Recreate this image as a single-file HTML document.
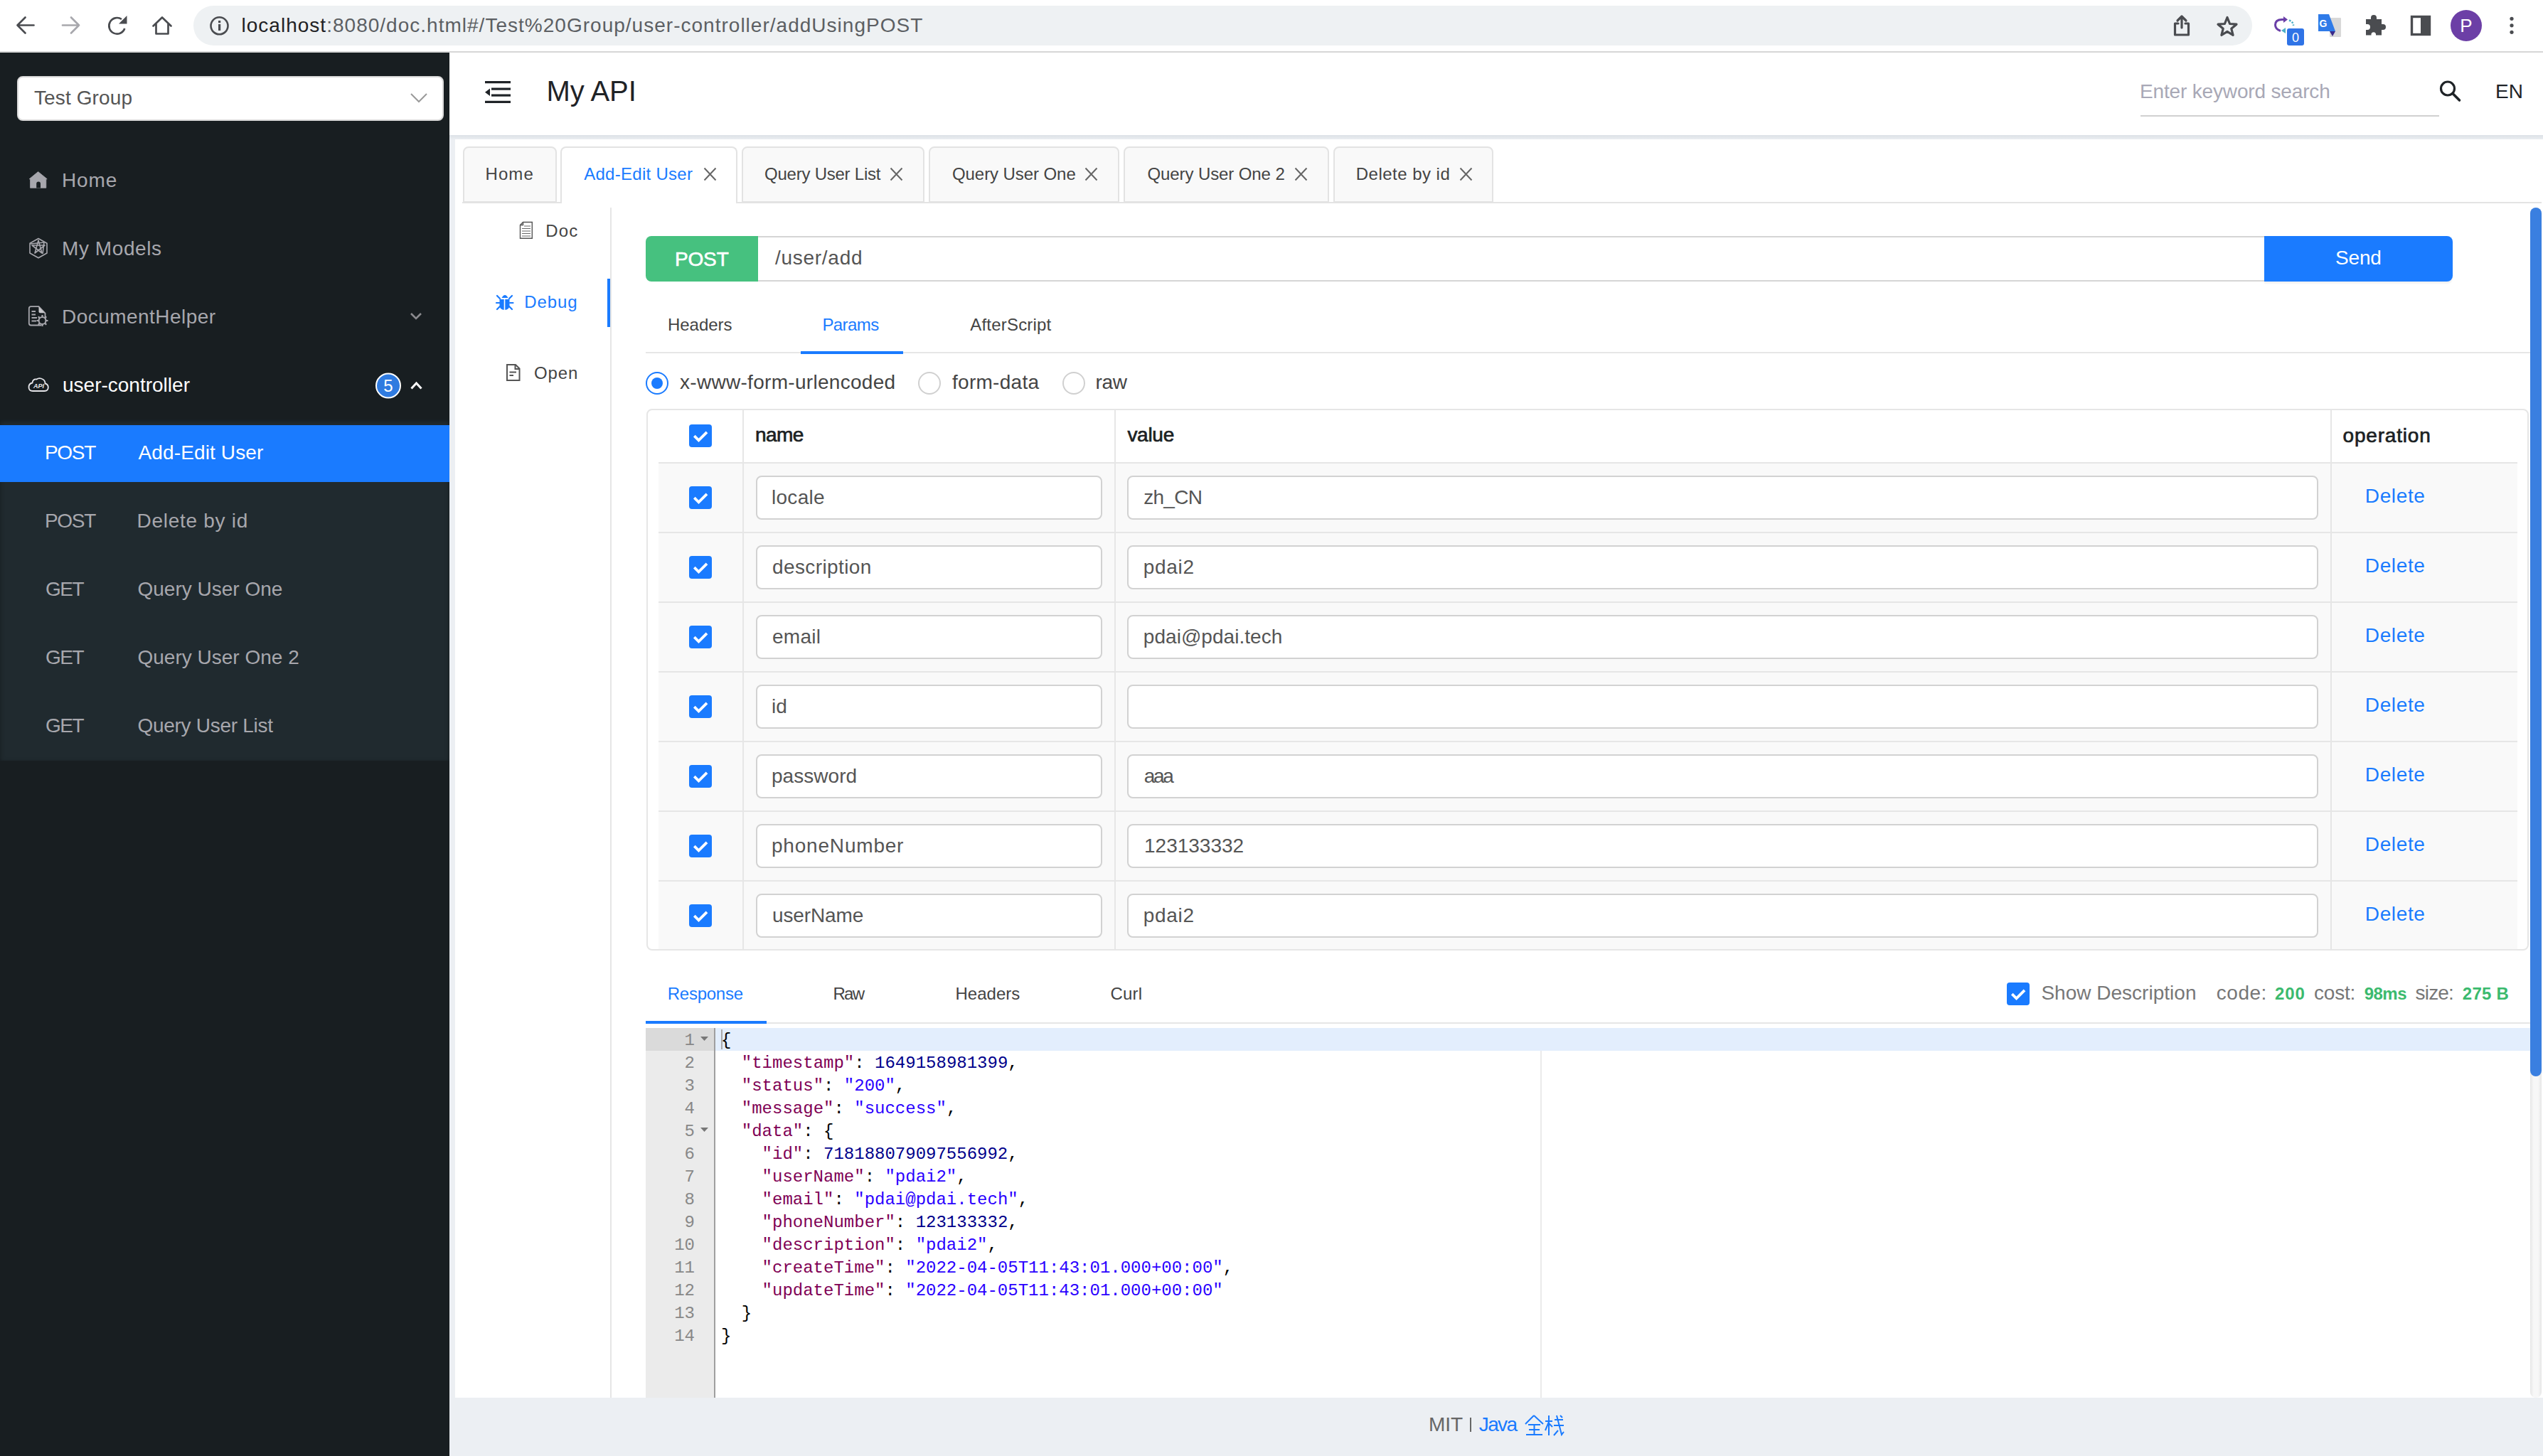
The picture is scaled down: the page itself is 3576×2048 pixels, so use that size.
<!DOCTYPE html>
<html><head><meta charset="utf-8"><title>Knife4j</title>
<style>
html,body{margin:0;padding:0;width:3576px;height:2048px;overflow:hidden;background:#fff;font-family:'Liberation Sans', sans-serif}
.t{position:absolute;line-height:1;white-space:pre}
svg{overflow:visible}
</style></head><body>
<div style="position:absolute;left:0px;top:0px;width:3576px;height:72px;background:#fff"></div>
<div style="position:absolute;left:0px;top:72px;width:3576px;height:2px;background:#d6d6d6"></div>
<div style="position:absolute;left:272px;top:8px;width:2895px;height:56px;background:#eef1f3;border-radius:28px"></div>
<svg style="position:absolute;left:0;top:0" width="420" height="72" viewBox="0 0 420 72">
<g fill="none" stroke="#4a4c50" stroke-width="2.7" stroke-linecap="round" stroke-linejoin="round">
<path d="M47.5 35.5H24.5M35.5 24.5L24.5 35.5L35.5 46.5"/>
</g>
<g fill="none" stroke="#a8a8ad" stroke-width="2.7" stroke-linecap="round" stroke-linejoin="round">
<path d="M88 35.5H111M100 24.5L111 35.5L100 46.5"/>
</g>
<g fill="none" stroke="#4a4c50" stroke-width="2.7">
<path d="M175.3 40A11.3 11.3 0 1 1 171 27"/>
</g>
<path d="M167 33.5L178.5 33.5L178.5 22Z" fill="#4a4c50"/>
<g fill="none" stroke="#4a4c50" stroke-width="2.7" stroke-linejoin="round" stroke-linecap="round">
<path d="M215.5 36.5L228 24.5L240.5 36.5M219.5 33.5V47.5H236.5V33.5"/>
</g>
<g fill="none" stroke="#4a4c50" stroke-width="2.6"><circle cx="308.5" cy="36.3" r="12"/></g>
<rect x="307" y="34" width="3.2" height="9" fill="#4a4c50"/><rect x="307" y="29" width="3.2" height="3.2" fill="#4a4c50"/>
</svg>
<div class="t" id="t0" style="left:339.50px;top:22.10px;font-size:28px;color:#5c5f63;font-weight:400;font-family:'Liberation Sans', sans-serif;letter-spacing:1.015px;"><span style="color:#1f2124">localhost</span>:8080/doc.html#/Test%20Group/user-controller/addUsingPOST</div>
<svg style="position:absolute;left:3040px;top:0" width="536" height="72" viewBox="3040 0 536 72">
<g fill="none" stroke="#4a4c50" stroke-width="3.2" stroke-linejoin="round" stroke-linecap="round">
<path d="M3063 33H3058.5V49H3077.5V33H3073M3068 39V23.5M3062 29L3068 23L3074 29"/>
<path d="M3132 24.5L3135.6 33.5L3145 34.2L3137.8 40.3L3140.1 49.5L3132 44.4L3123.9 49.5L3126.2 40.3L3119 34.2L3128.4 33.5Z"/>
</g>
<path d="M3207 43.5Q3199.5 41 3199.5 35Q3199.5 27.5 3209 27.5H3212" fill="none" stroke="#6a3fa8" stroke-width="3"/>
<path d="M3211 23L3217 27.5L3211 32Z" fill="#6a3fa8"/>
<path d="M3219 28.5Q3225 31 3225 36" fill="none" stroke="#4eb0c8" stroke-width="2.6" stroke-dasharray="2.5 1.8"/>
<path d="M3214 39L3208 43L3214 47Z" fill="#4eb0c8"/>
<rect x="3216" y="40" width="24" height="24" rx="3" fill="#2f73e6"/>
<text x="3228" y="59" font-family="Liberation Sans" font-size="18" fill="#fff" text-anchor="middle">0</text>
<rect x="3276" y="25" width="16" height="27" rx="1" fill="#d8d8d8"/>
<path d="M3260 20H3275L3284 44H3260Z" fill="#2f7be8"/>
<path d="M3276 44L3280 51L3284 44Z" fill="#3a2a8a"/>
<text x="3267" y="38" font-family="Liberation Sans" font-size="14" font-weight="700" fill="#fff" text-anchor="middle">G</text>
<path d="M3327 27H3334V25A4 4 0 0 1 3342 25V27H3349V34H3351A4 4 0 0 1 3351 42H3349V49.5H3341V47.5A3.5 3.5 0 0 0 3334.5 47.5V49.5H3327V42H3329A4 4 0 0 0 3329 34H3327Z" fill="#4a4c50"/>
<rect x="3391.5" y="23.5" width="25" height="25" fill="none" stroke="#4a4c50" stroke-width="3.4"/>
<rect x="3404" y="23.5" width="12.5" height="25" fill="#4a4c50"/>
<circle cx="3468" cy="36" r="22" fill="#6c3fa6"/>
<text x="3468" y="45" font-family="Liberation Sans" font-size="26" fill="#fff" text-anchor="middle">P</text>
<circle cx="3532" cy="26.3" r="2.6" fill="#4a4c50"/><circle cx="3532" cy="35.8" r="2.6" fill="#4a4c50"/><circle cx="3532" cy="45.3" r="2.6" fill="#4a4c50"/>
</svg>
<div style="position:absolute;left:0px;top:74px;width:632px;height:1974px;background:#181e21"></div>
<div style="position:absolute;left:24px;top:107px;width:600px;height:63px;background:#fff;border-radius:8px;box-sizing:border-box;border:2px solid #d9d9d9"></div>
<div class="t" id="t1" style="left:48.00px;top:123.90px;font-size:28px;color:#555;font-weight:400;font-family:'Liberation Sans', sans-serif;letter-spacing:0.111px;">Test Group</div>
<svg style="position:absolute;left:576px;top:130px" width="26" height="16"><path d="M2 2L13 13L24 2" fill="none" stroke="#9a9a9a" stroke-width="2"/></svg>
<div class="t" id="t2" style="left:87.00px;top:239.70px;font-size:28px;color:#a7a7ad;font-weight:400;font-family:'Liberation Sans', sans-serif;letter-spacing:0.900px;">Home</div>
<div class="t" id="t3" style="left:87.00px;top:335.70px;font-size:28px;color:#a7a7ad;font-weight:400;font-family:'Liberation Sans', sans-serif;letter-spacing:0.587px;">My Models</div>
<div class="t" id="t4" style="left:87.00px;top:431.70px;font-size:28px;color:#a7a7ad;font-weight:400;font-family:'Liberation Sans', sans-serif;letter-spacing:0.462px;">DocumentHelper</div>
<div class="t" id="t5" style="left:88.00px;top:527.70px;font-size:28px;color:#fff;font-weight:400;font-family:'Liberation Sans', sans-serif;letter-spacing:0.000px;">user-controller</div>
<svg style="position:absolute;left:0;top:220px" width="632" height="360" viewBox="0 220 632 360">
<path d="M53.6 241.6L66.2 251.8H64.8V264.3H42.6V251.8H41.2Z" fill="#a7a7ad" stroke="#a7a7ad" stroke-width="0.8" stroke-linejoin="round"/>
<path d="M51.2 264.6V258.5A2.9 2.9 0 0 1 57 258.5V264.6Z" fill="#181e21"/>
<g fill="none" stroke="#a7a7ad" stroke-width="1.6" stroke-linejoin="round">
<path d="M54 335.5L66 342.3V356L54 362.8L42 356V342.3Z"/>
<path d="M54 338L59 356L45 345H63L49 356Z"/>
<path d="M43 343L62 341L60 357"/>
</g>
<g fill="none" stroke="#a7a7ad" stroke-width="1.8">
<path d="M58 457.5H43.5Q40.8 457.5 40.8 454.8V434Q40.8 431.2 43.5 431.2H54.5L63.5 440.5V447"/>
</g>
<path d="M54.5 431.5L63 440.3H56.5Q54.5 440.3 54.5 438.3Z" fill="#c8c8cc"/>
<g stroke="#a7a7ad" stroke-width="1.8"><path d="M44.5 438H50M44.5 442.5H50M44.5 447H52M44.5 451.5H51"/></g>
<g fill="none" stroke="#a7a7ad" stroke-width="2.2"><circle cx="59.5" cy="451" r="5"/></g>
<g stroke="#a7a7ad" stroke-width="2.2" stroke-linecap="butt"><path d="M59.5 443V445.5M59.5 456.5V459M51.5 451H54M65 451H67.5M53.8 445.3L55.6 447.1M63.4 454.9L65.2 456.7M53.8 456.7L55.6 454.9M63.4 447.1L65.2 445.3"/></g>
<path d="M46 550Q40.5 550 40.5 544.5Q40.5 539.5 45.5 538.5Q46 533 51.5 533.5Q54 531.5 58 532.5Q63.5 534 63.5 539.5Q67.8 540.5 67.8 544.8Q67.8 550 62.5 550Z" fill="none" stroke="#e6e6ea" stroke-width="1.8"/>
<text x="54.5" y="546" font-family="Liberation Sans" font-size="9" font-style="italic" font-weight="700" fill="#e6e6ea" text-anchor="middle">API</text>
<path d="M578 441L585 448L592 441" fill="none" stroke="#8a8a8e" stroke-width="2.6"/>
<path d="M578.5 546.5L585.5 539L592.5 546.5" fill="none" stroke="#ffffff" stroke-width="3"/>
<circle cx="546" cy="542.5" r="17" fill="#2f7be0" stroke="#fff" stroke-width="2"/>
</svg>
<div class="t" id="t6" style="left:546px;transform:translateX(-50%);top:531.10px;font-size:24px;color:#fff;font-weight:400;font-family:'Liberation Sans', sans-serif;">5</div>
<div style="position:absolute;left:0px;top:590px;width:632px;height:479.5px;background:#202a2f;box-shadow:inset 0 2px 6px rgba(0,0,0,.35)"></div>
<div style="position:absolute;left:0px;top:597.5px;width:632px;height:80px;background:#1a7bff"></div>
<div class="t" id="t7" style="left:63.00px;top:623.20px;font-size:28px;color:#fff;font-weight:400;font-family:'Liberation Sans', sans-serif;letter-spacing:-1.333px;">POST</div>
<div class="t" id="t8" style="left:194.50px;top:623.20px;font-size:28px;color:#fff;font-weight:400;font-family:'Liberation Sans', sans-serif;letter-spacing:0.125px;">Add-Edit User</div>
<div class="t" id="t9" style="left:63.00px;top:719.20px;font-size:28px;color:#a7a7ad;font-weight:400;font-family:'Liberation Sans', sans-serif;letter-spacing:-1.333px;">POST</div>
<div class="t" id="t10" style="left:192.50px;top:719.20px;font-size:28px;color:#a7a7ad;font-weight:400;font-family:'Liberation Sans', sans-serif;letter-spacing:0.727px;">Delete by id</div>
<div class="t" id="t11" style="left:64.00px;top:815.20px;font-size:28px;color:#a7a7ad;font-weight:400;font-family:'Liberation Sans', sans-serif;letter-spacing:-1.500px;">GET</div>
<div class="t" id="t12" style="left:193.50px;top:815.20px;font-size:28px;color:#a7a7ad;font-weight:400;font-family:'Liberation Sans', sans-serif;letter-spacing:0.000px;">Query User One</div>
<div class="t" id="t13" style="left:64.00px;top:911.20px;font-size:28px;color:#a7a7ad;font-weight:400;font-family:'Liberation Sans', sans-serif;letter-spacing:-1.500px;">GET</div>
<div class="t" id="t14" style="left:193.50px;top:911.20px;font-size:28px;color:#a7a7ad;font-weight:400;font-family:'Liberation Sans', sans-serif;letter-spacing:0.000px;">Query User One 2</div>
<div class="t" id="t15" style="left:64.00px;top:1007.20px;font-size:28px;color:#a7a7ad;font-weight:400;font-family:'Liberation Sans', sans-serif;letter-spacing:-1.500px;">GET</div>
<div class="t" id="t16" style="left:193.50px;top:1007.20px;font-size:28px;color:#a7a7ad;font-weight:400;font-family:'Liberation Sans', sans-serif;letter-spacing:-0.286px;">Query User List</div>
<div style="position:absolute;left:632px;top:74px;width:2944px;height:116px;background:#fff"></div>
<div style="position:absolute;left:632px;top:189.5px;width:2944px;height:1858.5px;background:#eceff3"></div>
<div style="position:absolute;left:632px;top:189.5px;width:2944px;height:7px;background:linear-gradient(#dde1e6,#eceff3)"></div>
<svg style="position:absolute;left:680px;top:110px" width="42" height="40" viewBox="680 110 42 40">
<g fill="#1f2327"><rect x="682" y="114" width="36" height="3.2"/><rect x="691" y="123.5" width="27" height="3.2"/><rect x="691" y="132.5" width="27" height="3.2"/><rect x="682" y="141.8" width="36" height="3.2"/>
<path d="M682 129.8L689 124.5V135Z"/></g></svg>
<div class="t" id="t17" style="left:768.60px;top:107.80px;font-size:40px;color:#1f2327;font-weight:400;font-family:'Liberation Sans', sans-serif;letter-spacing:-0.100px;">My API</div>
<div class="t" id="t18" style="left:3009.00px;top:114.95px;font-size:28px;color:#a8a8b6;font-weight:400;font-family:'Liberation Sans', sans-serif;letter-spacing:-0.158px;">Enter keyword search</div>
<div style="position:absolute;left:3010px;top:162px;width:420px;height:2px;background:#d0d0d0"></div>
<svg style="position:absolute;left:3425px;top:108px" width="40" height="40" viewBox="3425 108 40 40">
<circle cx="3442" cy="124.5" r="9.5" fill="none" stroke="#1f2327" stroke-width="3.2"/><path d="M3449 131.5L3458.5 141" stroke="#1f2327" stroke-width="3.6" stroke-linecap="round"/></svg>
<div class="t" id="t19" style="left:3509.00px;top:114.95px;font-size:28px;color:#1f2327;font-weight:400;font-family:'Liberation Sans', sans-serif;letter-spacing:0.000px;">EN</div>
<div style="position:absolute;left:640px;top:196px;width:2936px;height:1770px;background:#fff"></div>
<div style="position:absolute;left:650px;top:284px;width:2924px;height:2px;background:#e3e3e3"></div>
<div style="position:absolute;left:650.5px;top:206px;width:132.0px;height:79px;box-sizing:border-box;background:#f9f9f9;border:2px solid #e3e3e3;border-radius:8px 8px 0 0;"></div>
<div class="t" id="t20" style="left:682.50px;top:232.60px;font-size:24px;color:#444;font-weight:400;font-family:'Liberation Sans', sans-serif;letter-spacing:1.083px;">Home</div>
<div style="position:absolute;left:788px;top:206px;width:249px;height:79px;box-sizing:border-box;background:#fff;border:2px solid #e3e3e3;border-radius:8px 8px 0 0;border-bottom:0;height:80px;"></div>
<div class="t" id="t21" style="left:821.20px;top:232.60px;font-size:24px;color:#1a7bff;font-weight:400;font-family:'Liberation Sans', sans-serif;letter-spacing:0.275px;">Add-Edit User</div>
<svg style="position:absolute;left:989.6px;top:236px" width="17" height="18"><path d="M0.5 0.5L16.5 17.5M16.5 0.5L0.5 17.5" stroke="#666" stroke-width="2"/></svg>
<div style="position:absolute;left:1042.5px;top:206px;width:257.5px;height:79px;box-sizing:border-box;background:#f9f9f9;border:2px solid #e3e3e3;border-radius:8px 8px 0 0;"></div>
<div class="t" id="t22" style="left:1075.00px;top:232.60px;font-size:24px;color:#444;font-weight:400;font-family:'Liberation Sans', sans-serif;letter-spacing:-0.232px;">Query User List</div>
<svg style="position:absolute;left:1252px;top:236px" width="17" height="18"><path d="M0.5 0.5L16.5 17.5M16.5 0.5L0.5 17.5" stroke="#666" stroke-width="2"/></svg>
<div style="position:absolute;left:1305.5px;top:206px;width:268.5px;height:79px;box-sizing:border-box;background:#f9f9f9;border:2px solid #e3e3e3;border-radius:8px 8px 0 0;"></div>
<div class="t" id="t23" style="left:1339.00px;top:232.60px;font-size:24px;color:#444;font-weight:400;font-family:'Liberation Sans', sans-serif;letter-spacing:-0.077px;">Query User One</div>
<svg style="position:absolute;left:1526px;top:236px" width="17" height="18"><path d="M0.5 0.5L16.5 17.5M16.5 0.5L0.5 17.5" stroke="#666" stroke-width="2"/></svg>
<div style="position:absolute;left:1579.5px;top:206px;width:289.5px;height:79px;box-sizing:border-box;background:#f9f9f9;border:2px solid #e3e3e3;border-radius:8px 8px 0 0;"></div>
<div class="t" id="t24" style="left:1613.50px;top:232.60px;font-size:24px;color:#444;font-weight:400;font-family:'Liberation Sans', sans-serif;letter-spacing:-0.100px;">Query User One 2</div>
<svg style="position:absolute;left:1821px;top:236px" width="17" height="18"><path d="M0.5 0.5L16.5 17.5M16.5 0.5L0.5 17.5" stroke="#666" stroke-width="2"/></svg>
<div style="position:absolute;left:1874.5px;top:206px;width:225.5px;height:79px;box-sizing:border-box;background:#f9f9f9;border:2px solid #e3e3e3;border-radius:8px 8px 0 0;"></div>
<div class="t" id="t25" style="left:1906.75px;top:232.60px;font-size:24px;color:#444;font-weight:400;font-family:'Liberation Sans', sans-serif;letter-spacing:0.477px;">Delete by id</div>
<svg style="position:absolute;left:2052.5px;top:236px" width="17" height="18"><path d="M0.5 0.5L16.5 17.5M16.5 0.5L0.5 17.5" stroke="#666" stroke-width="2"/></svg>
<div style="position:absolute;left:857.5px;top:292px;width:2px;height:1674px;background:#e6e6e6"></div>
<div style="position:absolute;left:854px;top:392px;width:4px;height:68px;background:#1a7bff"></div>
<div class="t" id="t26" style="left:767.20px;top:312.50px;font-size:24px;color:#444;font-weight:400;font-family:'Liberation Sans', sans-serif;letter-spacing:1.150px;">Doc</div>
<div class="t" id="t27" style="left:737.20px;top:412.50px;font-size:24px;color:#1a7bff;font-weight:400;font-family:'Liberation Sans', sans-serif;letter-spacing:0.950px;">Debug</div>
<div class="t" id="t28" style="left:751.00px;top:512.50px;font-size:24px;color:#444;font-weight:400;font-family:'Liberation Sans', sans-serif;letter-spacing:0.867px;">Open</div>
<svg style="position:absolute;left:690px;top:300px" width="70" height="250" viewBox="690 300 70 250">
<g fill="none" stroke="#555" stroke-width="1.4"><path d="M735.5 312.5H748.3V335.3H731.5V316.5Z M735.5 312.5V316.5H731.5"/></g>
<g stroke="#666" stroke-width="1.2"><path d="M737 318H746M734 321.5H746M734 325H746M734 328.5H746M734 332H746"/></g>
<g fill="#1a7bff">
<path d="M705.5 419Q710 411 714.5 419Z"/>
<path d="M702.5 421H716.5V429Q716.5 436 709.5 436Q702.5 436 702.5 429Z"/>
</g>
<g stroke="#fff" stroke-width="1.6"><path d="M709.5 421V436"/></g>
<g stroke="#1a7bff" stroke-width="2.2" stroke-linecap="round"><path d="M699 416L703 420M720 416L716 420M698 426H702.5M717 426H721.5M699 435L703 431M720 435L716 431"/></g>
<g fill="none" stroke="#555" stroke-width="2"><path d="M713 513H725L730.5 518.5V535H713Z M724.5 513V519H730.5"/></g>
<g stroke="#555" stroke-width="2"><path d="M716.5 523.5H726M716.5 528H722"/></g>
</svg>
<div style="position:absolute;left:908px;top:332px;width:158px;height:63.5px;background:#46c17f;border-radius:8px 0 0 8px"></div>
<div class="t" id="t29" style="left:949.00px;top:351.20px;font-size:28px;color:#fff;font-weight:400;font-family:'Liberation Sans', sans-serif;letter-spacing:-0.167px;-webkit-text-stroke:0.6px #fff;">POST</div>
<div style="position:absolute;left:1066px;top:332px;width:2118px;height:63.5px;box-sizing:border-box;border:2px solid #d5d5d5;border-left:0;border-right:0;background:#fff"></div>
<div class="t" id="t30" style="left:1090.00px;top:349.20px;font-size:28px;color:#555;font-weight:400;font-family:'Liberation Sans', sans-serif;letter-spacing:0.719px;">/user/add</div>
<div style="position:absolute;left:3184px;top:332px;width:265px;height:63.5px;background:#1a7bff;border-radius:0 8px 8px 0;box-shadow:0 3px 2px rgba(0,0,0,.05)"></div>
<div class="t" id="t31" style="left:3284.00px;top:348.70px;font-size:28px;color:#fff;font-weight:400;font-family:'Liberation Sans', sans-serif;letter-spacing:-0.167px;">Send</div>
<div style="position:absolute;left:908px;top:494.5px;width:2650px;height:2px;background:#e6e6e6"></div>
<div style="position:absolute;left:1126px;top:494px;width:144px;height:4px;background:#1a7bff"></div>
<div class="t" id="t32" style="left:939.00px;top:445.00px;font-size:24px;color:#444;font-weight:400;font-family:'Liberation Sans', sans-serif;letter-spacing:-0.033px;">Headers</div>
<div class="t" id="t33" style="left:1156.40px;top:445.00px;font-size:24px;color:#1a7bff;font-weight:400;font-family:'Liberation Sans', sans-serif;letter-spacing:-0.580px;">Params</div>
<div class="t" id="t34" style="left:1364.30px;top:445.00px;font-size:24px;color:#444;font-weight:400;font-family:'Liberation Sans', sans-serif;letter-spacing:0.190px;">AfterScript</div>
<div style="position:absolute;left:908px;top:523px;width:32px;height:32px;box-sizing:border-box;border:2px solid #1a7bff;border-radius:50%"></div>
<div style="position:absolute;left:916px;top:531px;width:16px;height:16px;background:#1a7bff;border-radius:50%"></div>
<div class="t" id="t35" style="left:956.00px;top:524.20px;font-size:28px;color:#444;font-weight:400;font-family:'Liberation Sans', sans-serif;letter-spacing:0.300px;">x-www-form-urlencoded</div>
<div style="position:absolute;left:1291px;top:523px;width:32px;height:32px;box-sizing:border-box;border:2px solid #d0d0d0;border-radius:50%"></div>
<div class="t" id="t36" style="left:1339.00px;top:524.20px;font-size:28px;color:#444;font-weight:400;font-family:'Liberation Sans', sans-serif;letter-spacing:0.281px;">form-data</div>
<div style="position:absolute;left:1494px;top:523px;width:32px;height:32px;box-sizing:border-box;border:2px solid #d0d0d0;border-radius:50%"></div>
<div class="t" id="t37" style="left:1540.50px;top:524.20px;font-size:28px;color:#444;font-weight:400;font-family:'Liberation Sans', sans-serif;letter-spacing:-0.375px;">raw</div>
<div style="position:absolute;left:908.5px;top:575px;width:2647.5px;height:762px;box-sizing:border-box;border:2px solid #e6e6e6;border-radius:8px"></div>
<svg style="position:absolute;left:969px;top:597px" width="32" height="32"><rect width="32" height="32" rx="4" fill="#1a7bff"/><path d="M7.3 16.2L13.5 22.4L25 10.8" fill="none" stroke="#fff" stroke-width="3.8"/></svg>
<div style="position:absolute;left:926px;top:650px;width:2614px;height:2px;background:#e6e6e6"></div>
<div class="t" id="t38" style="left:1062.00px;top:598.20px;font-size:28px;color:#1b1f23;font-weight:400;font-family:'Liberation Sans', sans-serif;letter-spacing:-0.567px;-webkit-text-stroke:0.7px #1b1f23;">name</div>
<div class="t" id="t39" style="left:1585.40px;top:598.20px;font-size:28px;color:#1b1f23;font-weight:400;font-family:'Liberation Sans', sans-serif;letter-spacing:-0.275px;-webkit-text-stroke:0.7px #1b1f23;">value</div>
<div class="t" id="t40" style="left:3294.60px;top:598.50px;font-size:28px;color:#1b1f23;font-weight:400;font-family:'Liberation Sans', sans-serif;letter-spacing:0.800px;-webkit-text-stroke:0.7px #1b1f23;">operation</div>
<div style="position:absolute;left:926px;top:652px;width:2614px;height:96px;background:#f9f9f9"></div>
<div style="position:absolute;left:926px;top:748px;width:2614px;height:2px;background:#e6e6e6"></div>
<svg style="position:absolute;left:969px;top:684px" width="32" height="32"><rect width="32" height="32" rx="4" fill="#1a7bff"/><path d="M7.3 16.2L13.5 22.4L25 10.8" fill="none" stroke="#fff" stroke-width="3.8"/></svg>
<div style="position:absolute;left:1063px;top:668.5px;width:487px;height:62.5px;box-sizing:border-box;background:#fff;border:2px solid #d2d2d2;border-radius:8px"></div>
<div class="t" id="t41" style="left:1085.00px;top:685.60px;font-size:28px;color:#555;font-weight:400;font-family:'Liberation Sans', sans-serif;letter-spacing:0.280px;">locale</div>
<div style="position:absolute;left:1585.4px;top:668.5px;width:1674.6px;height:62.5px;box-sizing:border-box;background:#fff;border:2px solid #d2d2d2;border-radius:8px"></div>
<div class="t" id="t42" style="left:1608.20px;top:685.60px;font-size:28px;color:#555;font-weight:400;font-family:'Liberation Sans', sans-serif;letter-spacing:-0.700px;">zh_CN</div>
<div class="t" id="t43" style="left:3325.80px;top:684.10px;font-size:28px;color:#1a7bff;font-weight:400;font-family:'Liberation Sans', sans-serif;letter-spacing:0.640px;">Delete</div>
<div style="position:absolute;left:926px;top:750px;width:2614px;height:96px;background:#f9f9f9"></div>
<div style="position:absolute;left:926px;top:846px;width:2614px;height:2px;background:#e6e6e6"></div>
<svg style="position:absolute;left:969px;top:782px" width="32" height="32"><rect width="32" height="32" rx="4" fill="#1a7bff"/><path d="M7.3 16.2L13.5 22.4L25 10.8" fill="none" stroke="#fff" stroke-width="3.8"/></svg>
<div style="position:absolute;left:1063px;top:766.5px;width:487px;height:62.5px;box-sizing:border-box;background:#fff;border:2px solid #d2d2d2;border-radius:8px"></div>
<div class="t" id="t44" style="left:1086.00px;top:783.60px;font-size:28px;color:#555;font-weight:400;font-family:'Liberation Sans', sans-serif;letter-spacing:0.400px;">description</div>
<div style="position:absolute;left:1585.4px;top:766.5px;width:1674.6px;height:62.5px;box-sizing:border-box;background:#fff;border:2px solid #d2d2d2;border-radius:8px"></div>
<div class="t" id="t45" style="left:1607.80px;top:783.60px;font-size:28px;color:#555;font-weight:400;font-family:'Liberation Sans', sans-serif;letter-spacing:0.700px;">pdai2</div>
<div class="t" id="t46" style="left:3325.80px;top:782.10px;font-size:28px;color:#1a7bff;font-weight:400;font-family:'Liberation Sans', sans-serif;letter-spacing:0.640px;">Delete</div>
<div style="position:absolute;left:926px;top:848px;width:2614px;height:96px;background:#f9f9f9"></div>
<div style="position:absolute;left:926px;top:944px;width:2614px;height:2px;background:#e6e6e6"></div>
<svg style="position:absolute;left:969px;top:880px" width="32" height="32"><rect width="32" height="32" rx="4" fill="#1a7bff"/><path d="M7.3 16.2L13.5 22.4L25 10.8" fill="none" stroke="#fff" stroke-width="3.8"/></svg>
<div style="position:absolute;left:1063px;top:864.5px;width:487px;height:62.5px;box-sizing:border-box;background:#fff;border:2px solid #d2d2d2;border-radius:8px"></div>
<div class="t" id="t47" style="left:1086.00px;top:881.60px;font-size:28px;color:#555;font-weight:400;font-family:'Liberation Sans', sans-serif;letter-spacing:0.250px;">email</div>
<div style="position:absolute;left:1585.4px;top:864.5px;width:1674.6px;height:62.5px;box-sizing:border-box;background:#fff;border:2px solid #d2d2d2;border-radius:8px"></div>
<div class="t" id="t48" style="left:1607.80px;top:881.60px;font-size:28px;color:#555;font-weight:400;font-family:'Liberation Sans', sans-serif;letter-spacing:0.038px;">pdai@pdai.tech</div>
<div class="t" id="t49" style="left:3325.80px;top:880.10px;font-size:28px;color:#1a7bff;font-weight:400;font-family:'Liberation Sans', sans-serif;letter-spacing:0.640px;">Delete</div>
<div style="position:absolute;left:926px;top:946px;width:2614px;height:96px;background:#f9f9f9"></div>
<div style="position:absolute;left:926px;top:1042px;width:2614px;height:2px;background:#e6e6e6"></div>
<svg style="position:absolute;left:969px;top:978px" width="32" height="32"><rect width="32" height="32" rx="4" fill="#1a7bff"/><path d="M7.3 16.2L13.5 22.4L25 10.8" fill="none" stroke="#fff" stroke-width="3.8"/></svg>
<div style="position:absolute;left:1063px;top:962.5px;width:487px;height:62.5px;box-sizing:border-box;background:#fff;border:2px solid #d2d2d2;border-radius:8px"></div>
<div class="t" id="t50" style="left:1085.00px;top:979.60px;font-size:28px;color:#555;font-weight:400;font-family:'Liberation Sans', sans-serif;">id</div>
<div style="position:absolute;left:1585.4px;top:962.5px;width:1674.6px;height:62.5px;box-sizing:border-box;background:#fff;border:2px solid #d2d2d2;border-radius:8px"></div>
<div class="t" id="t51" style="left:3325.80px;top:978.10px;font-size:28px;color:#1a7bff;font-weight:400;font-family:'Liberation Sans', sans-serif;letter-spacing:0.640px;">Delete</div>
<div style="position:absolute;left:926px;top:1044px;width:2614px;height:96px;background:#f9f9f9"></div>
<div style="position:absolute;left:926px;top:1140px;width:2614px;height:2px;background:#e6e6e6"></div>
<svg style="position:absolute;left:969px;top:1076px" width="32" height="32"><rect width="32" height="32" rx="4" fill="#1a7bff"/><path d="M7.3 16.2L13.5 22.4L25 10.8" fill="none" stroke="#fff" stroke-width="3.8"/></svg>
<div style="position:absolute;left:1063px;top:1060.5px;width:487px;height:62.5px;box-sizing:border-box;background:#fff;border:2px solid #d2d2d2;border-radius:8px"></div>
<div class="t" id="t52" style="left:1085.00px;top:1077.60px;font-size:28px;color:#555;font-weight:400;font-family:'Liberation Sans', sans-serif;letter-spacing:0.043px;">password</div>
<div style="position:absolute;left:1585.4px;top:1060.5px;width:1674.6px;height:62.5px;box-sizing:border-box;background:#fff;border:2px solid #d2d2d2;border-radius:8px"></div>
<div class="t" id="t53" style="left:1608.80px;top:1077.60px;font-size:28px;color:#555;font-weight:400;font-family:'Liberation Sans', sans-serif;letter-spacing:-2.400px;">aaa</div>
<div class="t" id="t54" style="left:3325.80px;top:1076.10px;font-size:28px;color:#1a7bff;font-weight:400;font-family:'Liberation Sans', sans-serif;letter-spacing:0.640px;">Delete</div>
<div style="position:absolute;left:926px;top:1142px;width:2614px;height:96px;background:#f9f9f9"></div>
<div style="position:absolute;left:926px;top:1238px;width:2614px;height:2px;background:#e6e6e6"></div>
<svg style="position:absolute;left:969px;top:1174px" width="32" height="32"><rect width="32" height="32" rx="4" fill="#1a7bff"/><path d="M7.3 16.2L13.5 22.4L25 10.8" fill="none" stroke="#fff" stroke-width="3.8"/></svg>
<div style="position:absolute;left:1063px;top:1158.5px;width:487px;height:62.5px;box-sizing:border-box;background:#fff;border:2px solid #d2d2d2;border-radius:8px"></div>
<div class="t" id="t55" style="left:1085.00px;top:1175.60px;font-size:28px;color:#555;font-weight:400;font-family:'Liberation Sans', sans-serif;letter-spacing:0.800px;">phoneNumber</div>
<div style="position:absolute;left:1585.4px;top:1158.5px;width:1674.6px;height:62.5px;box-sizing:border-box;background:#fff;border:2px solid #d2d2d2;border-radius:8px"></div>
<div class="t" id="t56" style="left:1609.00px;top:1175.60px;font-size:28px;color:#555;font-weight:400;font-family:'Liberation Sans', sans-serif;letter-spacing:0.000px;">123133332</div>
<div class="t" id="t57" style="left:3325.80px;top:1174.10px;font-size:28px;color:#1a7bff;font-weight:400;font-family:'Liberation Sans', sans-serif;letter-spacing:0.640px;">Delete</div>
<div style="position:absolute;left:926px;top:1240px;width:2614px;height:95px;background:#f9f9f9"></div>
<svg style="position:absolute;left:969px;top:1272px" width="32" height="32"><rect width="32" height="32" rx="4" fill="#1a7bff"/><path d="M7.3 16.2L13.5 22.4L25 10.8" fill="none" stroke="#fff" stroke-width="3.8"/></svg>
<div style="position:absolute;left:1063px;top:1256.5px;width:487px;height:62.5px;box-sizing:border-box;background:#fff;border:2px solid #d2d2d2;border-radius:8px"></div>
<div class="t" id="t58" style="left:1086.00px;top:1273.60px;font-size:28px;color:#555;font-weight:400;font-family:'Liberation Sans', sans-serif;letter-spacing:-0.114px;">userName</div>
<div style="position:absolute;left:1585.4px;top:1256.5px;width:1674.6px;height:62.5px;box-sizing:border-box;background:#fff;border:2px solid #d2d2d2;border-radius:8px"></div>
<div class="t" id="t59" style="left:1607.80px;top:1273.60px;font-size:28px;color:#555;font-weight:400;font-family:'Liberation Sans', sans-serif;letter-spacing:0.700px;">pdai2</div>
<div class="t" id="t60" style="left:3325.80px;top:1272.10px;font-size:28px;color:#1a7bff;font-weight:400;font-family:'Liberation Sans', sans-serif;letter-spacing:0.640px;">Delete</div>
<div style="position:absolute;left:1044px;top:577px;width:2px;height:758px;background:#e6e6e6"></div>
<div style="position:absolute;left:1567px;top:577px;width:2px;height:758px;background:#e6e6e6"></div>
<div style="position:absolute;left:3277px;top:577px;width:2px;height:758px;background:#e6e6e6"></div>
<div style="position:absolute;left:908px;top:1438px;width:2650px;height:2px;background:#e6e6e6"></div>
<div style="position:absolute;left:908px;top:1436.4px;width:170px;height:3.6px;background:#1a7bff"></div>
<div class="t" id="t61" style="left:938.70px;top:1386.10px;font-size:24px;color:#1a7bff;font-weight:400;font-family:'Liberation Sans', sans-serif;letter-spacing:-0.243px;">Response</div>
<div class="t" id="t62" style="left:1171.50px;top:1386.10px;font-size:24px;color:#444;font-weight:400;font-family:'Liberation Sans', sans-serif;letter-spacing:-1.750px;">Raw</div>
<div class="t" id="t63" style="left:1343.50px;top:1386.10px;font-size:24px;color:#444;font-weight:400;font-family:'Liberation Sans', sans-serif;letter-spacing:0.000px;">Headers</div>
<div class="t" id="t64" style="left:1561.60px;top:1386.10px;font-size:24px;color:#444;font-weight:400;font-family:'Liberation Sans', sans-serif;letter-spacing:0.133px;">Curl</div>
<svg style="position:absolute;left:2822px;top:1382px" width="32" height="32"><rect width="32" height="32" rx="4" fill="#1a7bff"/><path d="M7.3 16.2L13.5 22.4L25 10.8" fill="none" stroke="#fff" stroke-width="3.8"/></svg>
<div class="t" id="t65" style="left:2870.40px;top:1383.00px;font-size:28px;color:#777;font-weight:400;font-family:'Liberation Sans', sans-serif;letter-spacing:0.013px;">Show Description</div>
<div class="t" id="t66" style="left:3116.80px;top:1383.00px;font-size:28px;color:#777;font-weight:400;font-family:'Liberation Sans', sans-serif;letter-spacing:0.525px;">code:</div>
<div class="t" id="t67" style="left:3199.10px;top:1386.40px;font-size:24px;color:#3bba6e;font-weight:700;font-family:'Liberation Sans', sans-serif;letter-spacing:0.900px;">200</div>
<div class="t" id="t68" style="left:3254.00px;top:1383.00px;font-size:28px;color:#777;font-weight:400;font-family:'Liberation Sans', sans-serif;letter-spacing:-0.200px;">cost:</div>
<div class="t" id="t69" style="left:3324.80px;top:1386.40px;font-size:24px;color:#3bba6e;font-weight:700;font-family:'Liberation Sans', sans-serif;letter-spacing:-0.567px;">98ms</div>
<div class="t" id="t70" style="left:3396.60px;top:1383.00px;font-size:28px;color:#777;font-weight:400;font-family:'Liberation Sans', sans-serif;letter-spacing:-0.825px;">size:</div>
<div class="t" id="t71" style="left:3462.80px;top:1386.40px;font-size:24px;color:#3bba6e;font-weight:700;font-family:'Liberation Sans', sans-serif;letter-spacing:0.250px;">275 B</div>
<div style="position:absolute;left:908px;top:1446.4px;width:96px;height:519.5999999999999px;background:#ebebeb"></div>
<div style="position:absolute;left:1004px;top:1446.4px;width:2px;height:519.5999999999999px;background:#9f9f9f"></div>
<div style="position:absolute;left:2166px;top:1446.4px;width:2px;height:519.5999999999999px;background:#ebebeb"></div>
<div style="position:absolute;left:1006px;top:1446.4px;width:2552px;height:32px;background:#e3eefd"></div>
<div style="position:absolute;left:908px;top:1446.4px;width:96px;height:32px;background:#dadada"></div>
<div style="position:absolute;left:1014px;top:1448.4px;width:2px;height:28px;background:#aaa"></div>
<div class="t" id="t72" style="left:1014.00px;top:1451.99px;font-size:24px;color:#000;font-weight:400;font-family:'Liberation Mono', monospace;">{</div>
<div class="t" id="t73" style="right:2599px;top:1451.99px;font-size:24px;color:#888;font-weight:400;font-family:'Liberation Mono', monospace;">1</div>
<div class="t" id="t74" style="left:1014.00px;top:1483.99px;font-size:24px;color:#000;font-weight:400;font-family:'Liberation Mono', monospace;">  <span style="color:#7f0055">"timestamp"</span>: <span style="color:#00008b">1649158981399</span>,</div>
<div class="t" id="t75" style="right:2599px;top:1483.99px;font-size:24px;color:#888;font-weight:400;font-family:'Liberation Mono', monospace;">2</div>
<div class="t" id="t76" style="left:1014.00px;top:1515.99px;font-size:24px;color:#000;font-weight:400;font-family:'Liberation Mono', monospace;">  <span style="color:#7f0055">"status"</span>: <span style="color:#2a00ff">"200"</span>,</div>
<div class="t" id="t77" style="right:2599px;top:1515.99px;font-size:24px;color:#888;font-weight:400;font-family:'Liberation Mono', monospace;">3</div>
<div class="t" id="t78" style="left:1014.00px;top:1547.99px;font-size:24px;color:#000;font-weight:400;font-family:'Liberation Mono', monospace;">  <span style="color:#7f0055">"message"</span>: <span style="color:#2a00ff">"success"</span>,</div>
<div class="t" id="t79" style="right:2599px;top:1547.99px;font-size:24px;color:#888;font-weight:400;font-family:'Liberation Mono', monospace;">4</div>
<div class="t" id="t80" style="left:1014.00px;top:1579.99px;font-size:24px;color:#000;font-weight:400;font-family:'Liberation Mono', monospace;">  <span style="color:#7f0055">"data"</span>: {</div>
<div class="t" id="t81" style="right:2599px;top:1579.99px;font-size:24px;color:#888;font-weight:400;font-family:'Liberation Mono', monospace;">5</div>
<div class="t" id="t82" style="left:1014.00px;top:1611.99px;font-size:24px;color:#000;font-weight:400;font-family:'Liberation Mono', monospace;">    <span style="color:#7f0055">"id"</span>: <span style="color:#00008b">718188079097556992</span>,</div>
<div class="t" id="t83" style="right:2599px;top:1611.99px;font-size:24px;color:#888;font-weight:400;font-family:'Liberation Mono', monospace;">6</div>
<div class="t" id="t84" style="left:1014.00px;top:1643.99px;font-size:24px;color:#000;font-weight:400;font-family:'Liberation Mono', monospace;">    <span style="color:#7f0055">"userName"</span>: <span style="color:#2a00ff">"pdai2"</span>,</div>
<div class="t" id="t85" style="right:2599px;top:1643.99px;font-size:24px;color:#888;font-weight:400;font-family:'Liberation Mono', monospace;">7</div>
<div class="t" id="t86" style="left:1014.00px;top:1675.99px;font-size:24px;color:#000;font-weight:400;font-family:'Liberation Mono', monospace;">    <span style="color:#7f0055">"email"</span>: <span style="color:#2a00ff">"pdai@pdai.tech"</span>,</div>
<div class="t" id="t87" style="right:2599px;top:1675.99px;font-size:24px;color:#888;font-weight:400;font-family:'Liberation Mono', monospace;">8</div>
<div class="t" id="t88" style="left:1014.00px;top:1707.99px;font-size:24px;color:#000;font-weight:400;font-family:'Liberation Mono', monospace;">    <span style="color:#7f0055">"phoneNumber"</span>: <span style="color:#00008b">123133332</span>,</div>
<div class="t" id="t89" style="right:2599px;top:1707.99px;font-size:24px;color:#888;font-weight:400;font-family:'Liberation Mono', monospace;">9</div>
<div class="t" id="t90" style="left:1014.00px;top:1739.99px;font-size:24px;color:#000;font-weight:400;font-family:'Liberation Mono', monospace;">    <span style="color:#7f0055">"description"</span>: <span style="color:#2a00ff">"pdai2"</span>,</div>
<div class="t" id="t91" style="right:2599px;top:1739.99px;font-size:24px;color:#888;font-weight:400;font-family:'Liberation Mono', monospace;">10</div>
<div class="t" id="t92" style="left:1014.00px;top:1771.99px;font-size:24px;color:#000;font-weight:400;font-family:'Liberation Mono', monospace;">    <span style="color:#7f0055">"createTime"</span>: <span style="color:#2a00ff">"2022-04-05T11:43:01.000+00:00"</span>,</div>
<div class="t" id="t93" style="right:2599px;top:1771.99px;font-size:24px;color:#888;font-weight:400;font-family:'Liberation Mono', monospace;">11</div>
<div class="t" id="t94" style="left:1014.00px;top:1803.99px;font-size:24px;color:#000;font-weight:400;font-family:'Liberation Mono', monospace;">    <span style="color:#7f0055">"updateTime"</span>: <span style="color:#2a00ff">"2022-04-05T11:43:01.000+00:00"</span></div>
<div class="t" id="t95" style="right:2599px;top:1803.99px;font-size:24px;color:#888;font-weight:400;font-family:'Liberation Mono', monospace;">12</div>
<div class="t" id="t96" style="left:1014.00px;top:1835.99px;font-size:24px;color:#000;font-weight:400;font-family:'Liberation Mono', monospace;">  }</div>
<div class="t" id="t97" style="right:2599px;top:1835.99px;font-size:24px;color:#888;font-weight:400;font-family:'Liberation Mono', monospace;">13</div>
<div class="t" id="t98" style="left:1014.00px;top:1867.99px;font-size:24px;color:#000;font-weight:400;font-family:'Liberation Mono', monospace;">}</div>
<div class="t" id="t99" style="right:2599px;top:1867.99px;font-size:24px;color:#888;font-weight:400;font-family:'Liberation Mono', monospace;">14</div>
<svg style="position:absolute;left:985px;top:1458.4px" width="12" height="8"><path d="M0 0H11L5.5 6Z" fill="#777"/></svg>
<svg style="position:absolute;left:985px;top:1586.4px" width="12" height="8"><path d="M0 0H11L5.5 6Z" fill="#777"/></svg>
<div style="position:absolute;left:3558px;top:292px;width:16px;height:1674px;background:linear-gradient(90deg,#e6e6e6,#f7f7f7 30%,#f7f7f7 70%,#e6e6e6);border-radius:8px"></div>
<div style="position:absolute;left:3558px;top:292px;width:16px;height:1222px;background:#3a7fe0;border-radius:8px"></div>
<div class="t" id="t100" style="left:2008.90px;top:1990.20px;font-size:28px;color:#666;font-weight:400;font-family:'Liberation Sans', sans-serif;letter-spacing:0.050px;">MIT</div>
<div style="position:absolute;left:2067px;top:1993.5px;width:2.4px;height:20.5px;background:#666"></div>
<div class="t" id="t101" style="left:2079.80px;top:1990.20px;font-size:28px;color:#1a7bff;font-weight:400;font-family:'Liberation Sans', sans-serif;letter-spacing:-1.633px;">Java</div>
<svg style="position:absolute;left:2140px;top:1988px" width="60" height="36" viewBox="2140 1988 60 36">
<g fill="none" stroke="#1a7bff" stroke-width="2">
<path d="M2157 1991L2145 2003M2157 1991L2170 2003M2149 2004H2166M2157.5 2004V2018M2150 2011H2165M2146 2018H2169"/>
<path d="M2178 1991V2019M2173 1999H2183M2178 2000L2173 2012M2178 2002L2183 2007"/>
<path d="M2186 1997H2198M2185 2005H2199M2189 1991L2196 2018L2199 2014M2194 1991L2197 1994M2191 2012L2185 2019"/>
</g></svg>
</body></html>
